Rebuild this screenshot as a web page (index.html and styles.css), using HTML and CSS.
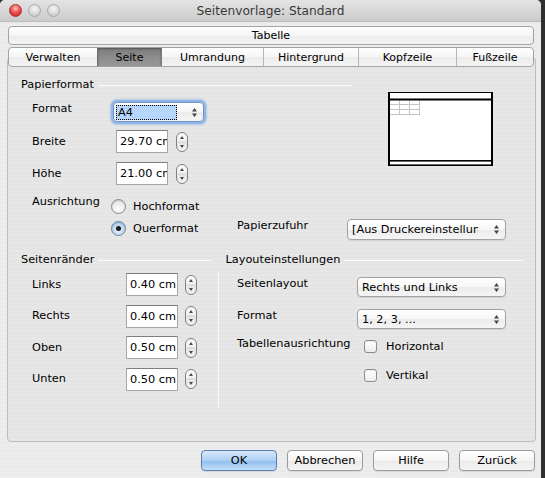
FILE: index.html
```html
<!DOCTYPE html>
<html>
<head>
<meta charset="utf-8">
<title>Seitenvorlage: Standard</title>
<link rel="stylesheet" href="styles.css">
</head>
<body>
<div class="window">
  <div class="titlebar">
    <div class="lights"><span class="light red"></span><span class="light"></span><span class="light"></span></div>
    <div class="title">Seitenvorlage: Standard</div>
    <div></div>
  </div>
  <div class="body">
    <div class="seg single">Tabelle</div>
    <div class="seg tabs">
      <span class="tab t1">Verwalten</span>
      <span class="tab t2 active">Seite</span>
      <span class="tab t3">Umrandung</span>
      <span class="tab t4">Hintergrund</span>
      <span class="tab t5">Kopfzeile</span>
      <span class="tab t6">Fußzeile</span>
    </div>
    <div class="panel">
      <div class="top">
        <div class="heading"><span>Papierformat</span><i class="rule"></i></div>
        <div class="preview">
          <svg width="105" height="74" viewBox="0 0 105 74">
            <rect x="0" y="0" width="105" height="74" fill="#fff"/>
            <g stroke="#c4c4c4" stroke-width="1">
              <line x1="1.5" y1="8" x2="1.5" y2="22.5"/>
              <line x1="11.5" y1="8" x2="11.5" y2="22.5"/>
              <line x1="21.5" y1="8" x2="21.5" y2="22.5"/>
              <line x1="31.5" y1="8" x2="31.5" y2="22.5"/>
              <line x1="1" y1="12.5" x2="32" y2="12.5"/>
              <line x1="1" y1="17.5" x2="32" y2="17.5"/>
              <line x1="1" y1="22.5" x2="32" y2="22.5"/>
            </g>
            <rect x="0" y="0" width="2" height="74" fill="#000"/>
            <rect x="103" y="0" width="2" height="74" fill="#000"/>
            <rect x="0" y="0" width="105" height="1" fill="#000"/>
            <rect x="0" y="72.4" width="105" height="1.6" fill="#000"/>
            <rect x="0" y="6.5" width="105" height="2" fill="#000"/>
            <rect x="0" y="68" width="105" height="1.6" fill="#000"/>
          </svg>
        </div>
        <div class="row r-format">
          <span class="lbl lbl-top w81">Format</span>
          <div class="select focus w91">
            <span class="sel">A4</span>
            <svg class="arrows" width="7" height="11" viewBox="0 0 7 11"><path d="M1 4.5 L3.5 1 L6 4.5 Z M1 6.5 L3.5 10 L6 6.5 Z" fill="#444"/></svg>
          </div>
        </div>
        <div class="row r-breite">
          <span class="lbl w84">Breite</span>
          <div class="input">29.70 cm</div>
          <div class="stepper s8"><svg width="10" height="18" viewBox="0 0 10 18"><line x1="1" y1="9" x2="9" y2="9" stroke="#d2d2d2"/><path d="M3 6 L5 3 L7 6 Z M3 12 L5 15 L7 12 Z" fill="#4a4a4a"/></svg></div>
        </div>
        <div class="row r-hoehe">
          <span class="lbl w84">Höhe</span>
          <div class="input">21.00 cm</div>
          <div class="stepper s8"><svg width="10" height="18" viewBox="0 0 10 18"><line x1="1" y1="9" x2="9" y2="9" stroke="#d2d2d2"/><path d="M3 6 L5 3 L7 6 Z M3 12 L5 15 L7 12 Z" fill="#4a4a4a"/></svg></div>
        </div>
        <div class="orient">
          <span class="lbl lbl-top w78">Ausrichtung</span>
          <div class="radios">
            <div class="radio-row"><span class="radio"></span><span>Hochformat</span></div>
            <div class="radio-row">
              <span class="radio on"></span><span class="w104">Querformat</span>
              <span class="lbl feed w110">Papierzufuhr</span>
              <div class="select feed-select w159">
                <span class="clip">[Aus Druckereinstellungen]</span>
                <svg class="arrows" width="7" height="11" viewBox="0 0 7 11"><path d="M1 4.5 L3.5 1 L6 4.5 Z M1 6.5 L3.5 10 L6 6.5 Z" fill="#444"/></svg>
              </div>
            </div>
          </div>
        </div>
      </div>

      <div class="bottom">
        <div class="margins">
          <div class="heading"><span>Seitenränder</span><i class="rule"></i></div>
          <div class="mrow first">
            <span class="lbl w94">Links</span><div class="input">0.40 cm</div>
            <div class="stepper s7"><svg width="10" height="18" viewBox="0 0 10 18"><line x1="1" y1="9" x2="9" y2="9" stroke="#d2d2d2"/><path d="M3 6 L5 3 L7 6 Z M3 12 L5 15 L7 12 Z" fill="#4a4a4a"/></svg></div>
          </div>
          <div class="mrow">
            <span class="lbl w94">Rechts</span><div class="input">0.40 cm</div>
            <div class="stepper s7"><svg width="10" height="18" viewBox="0 0 10 18"><line x1="1" y1="9" x2="9" y2="9" stroke="#d2d2d2"/><path d="M3 6 L5 3 L7 6 Z M3 12 L5 15 L7 12 Z" fill="#4a4a4a"/></svg></div>
          </div>
          <div class="mrow">
            <span class="lbl w94">Oben</span><div class="input">0.50 cm</div>
            <div class="stepper s7"><svg width="10" height="18" viewBox="0 0 10 18"><line x1="1" y1="9" x2="9" y2="9" stroke="#d2d2d2"/><path d="M3 6 L5 3 L7 6 Z M3 12 L5 15 L7 12 Z" fill="#4a4a4a"/></svg></div>
          </div>
          <div class="mrow">
            <span class="lbl w94">Unten</span><div class="input">0.50 cm</div>
            <div class="stepper s7"><svg width="10" height="18" viewBox="0 0 10 18"><line x1="1" y1="9" x2="9" y2="9" stroke="#d2d2d2"/><path d="M3 6 L5 3 L7 6 Z M3 12 L5 15 L7 12 Z" fill="#4a4a4a"/></svg></div>
          </div>
        </div>
        <div class="layout">
          <div class="heading lh"><span>Layouteinstellungen</span><i class="rule"></i></div>
          <div class="layout-body">
            <div class="lrow">
              <span class="lbl lbl-top w120">Seitenlayout</span>
              <div class="select w149">
                <span>Rechts und Links</span>
                <svg class="arrows" width="7" height="11" viewBox="0 0 7 11"><path d="M1 4.5 L3.5 1 L6 4.5 Z M1 6.5 L3.5 10 L6 6.5 Z" fill="#444"/></svg>
              </div>
            </div>
            <div class="lrow second">
              <span class="lbl lbl-top w120">Format</span>
              <div class="select w149">
                <span>1, 2, 3, ...</span>
                <svg class="arrows" width="7" height="11" viewBox="0 0 7 11"><path d="M1 4.5 L3.5 1 L6 4.5 Z M1 6.5 L3.5 10 L6 6.5 Z" fill="#444"/></svg>
              </div>
            </div>
            <div class="tabrow">
              <span class="lbl lbl-top w127">Tabellenausrichtung</span>
              <div class="checks">
                <div class="check-row"><span class="check"></span><span>Horizontal</span></div>
                <div class="check-row"><span class="check"></span><span>Vertikal</span></div>
              </div>
            </div>
          </div>
        </div>
      </div>
    </div>
    <div class="buttons">
      <div class="btn default">OK</div>
      <div class="btn">Abbrechen</div>
      <div class="btn">Hilfe</div>
      <div class="btn">Zurück</div>
    </div>
  </div>
</div>
</body>
</html>
```

FILE: styles.css
```css
* { box-sizing: border-box; }
html, body { margin: 0; padding: 0; }
body {
  width: 545px;
  height: 478px;
  overflow: hidden;
  background: #2f2f2f;
  font-family: "DejaVu Sans", "Liberation Sans", sans-serif;
  font-size: 11.3px;
  color: #000;
}
.window {
  width: 541px;
  height: 478px;
  background: repeating-linear-gradient(180deg, #ededed 0 2px, #eaeaea 2px 4px);
  border-radius: 5px 5px 0 0;
  overflow: hidden;
  display: flex;
  flex-direction: column;
}
.titlebar {
  height: 22px;
  flex: none;
  display: grid;
  grid-template-columns: 1fr auto 1fr;
  align-items: center;
  background: linear-gradient(#e4e4e4, #cbcbcb);
  border-bottom: 1px solid #bcbcbc;
}
.lights { display: flex; gap: 6px; margin-left: 8.5px; }
.light {
  width: 13px; height: 13px; border-radius: 50%;
  border: 1px solid #a9a9a9;
  background: radial-gradient(circle at 50% 35%, #f7f7f7, #d2d2d2 65%, #bdbdbd);
}
.light.red {
  border-color: #a83232;
  background: radial-gradient(circle at 50% 30%, #ffc0c0, #f05050 45%, #c41c1c);
}
.title { font-size: 12.2px; color: #3a3a3a; white-space: nowrap; }

.body {
  flex: 1;
  padding: 4px 5px 0 7px;
  display: flex;
  flex-direction: column;
}
.seg {
  display: flex;
  border: 1px solid #a3a3a3;
  border-radius: 4px;
  background: linear-gradient(#fefefe, #f6f6f6 50%, #ececec 52%, #f4f4f4);
  overflow: hidden;
  font-size: 11px;
  flex: none;
}
.seg.single { height: 19px; margin: 0 2px 0 1px; justify-content: center; align-items: center; }
.seg.tabs { height: 20px; margin: 2px 2px 0 1px; position: relative; z-index: 1; }
.tab {
  display: flex; align-items: center; justify-content: center;
  border-left: 1px solid #b6b6b6;
  height: 100%;
}
.tab:first-child { border-left: none; }
.t1 { width: 88px; }
.t2 { width: 64px; }
.t3 { width: 102px; }
.t4 { width: 95px; }
.t5 { width: 98px; }
.t6 { width: 77px; }
.tab.active {
  background: linear-gradient(#7c7c7c, #8f8f8f 60%, #969696);
  box-shadow: inset 0 1px 2px rgba(0,0,0,.35);
  border-left-color: #6f6f6f;
}
.tab.active + .tab { border-left-color: #7a7a7a; }

.panel {
  flex: none;
  margin-top: -10px;
  height: 385px;
  border: 1px solid #bdbdbd;
  border-radius: 4px;
  background: repeating-linear-gradient(180deg, #e7e7e7 0 2px, #e4e4e4 2px 4px);
  padding: 20px 0 0 13px;
}

.heading { display: flex; align-items: center; height: 14px; line-height: 14px; white-space: nowrap; }
.rule { flex: 1; height: 1px; background: #fbfbfb; margin-left: 4px; }

.top { display: grid; grid-template-columns: 331px auto; }
.top .heading { grid-column: 1; grid-row: 1; }
.preview {
  grid-column: 2; grid-row: 1 / span 4;
  align-self: start;
  margin: 14px 0 0 36px;
  width: 105px; height: 74px;
}
.preview svg { display: block; }
.row { grid-column: 1; display: flex; align-items: center; padding-left: 11px; }
.r-format { margin-top: 10px; height: 20px; }
.r-breite { margin-top: 8px; height: 23px; }
.r-hoehe { margin-top: 9px; height: 23px; }

.lbl { flex: none; line-height: 14px; white-space: nowrap; }
.lbl-top { align-self: flex-start; }
.w78 { width: 78.5px; }
.w81 { width: 81px; }
.w84 { width: 84px; }
.w94 { width: 94px; }
.w104 { width: 104px; flex: none; }
.w110 { width: 110px; }
.w120 { width: 120px; }
.w127 { width: 127px; }
.w91 { width: 91px; }
.w149 { width: 149px; }
.w159 { width: 159px; }

.select {
  flex: none;
  display: flex; align-items: center;
  height: 20px;
  border: 1px solid #a2a2a2;
  border-radius: 4px;
  background: linear-gradient(#ffffff, #f7f7f7 50%, #ececec 52%, #f5f5f5);
  padding-left: 4px;
  white-space: nowrap;
  box-shadow: 0 1px 1px rgba(0,0,0,.08);
}
.select .arrows { margin-left: auto; margin-right: 5px; flex: none; }
.select.focus {
  padding-left: 2px;
  border-color: #6f93c6;
  box-shadow: 0 0 0 2px #8fb6ea, 0 0 2px 3px rgba(110,160,230,.45);
}
.sel {
  width: 61px; height: 15px; line-height: 13px;
  background: #b7d6fb;
  border: 1px dotted #000;
  padding-left: 1px;
}
.feed { margin-bottom: 4px; }
.feed-select { height: 21px; margin-top: 3px; }
.clip { width: 126px; overflow: hidden; }

.input {
  flex: none;
  width: 52px; height: 23px;
  background: #fff;
  border: 1px solid #a6a6a6;
  border-top-color: #7f7f7f;
  padding-left: 3px;
  line-height: 21px;
  overflow: hidden;
  white-space: nowrap;
}
.stepper {
  flex: none;
  width: 12px; height: 20px;
  border: 1px solid #808080;
  border-radius: 6px;
  background: linear-gradient(#fdfdfd, #efefef 50%, #e4e4e4 51%, #f4f4f4);
  display: flex;
}
.stepper svg { display: block; }
.s8 { margin-left: 8px; }
.s7 { margin-left: 7px; }

.orient { grid-column: 1 / -1; margin-top: 10px; display: flex; padding-left: 11px; }
.radios { display: flex; flex-direction: column; }
.radio-row { display: flex; align-items: center; height: 22px; white-space: nowrap; }
.radio {
  flex: none;
  width: 15px; height: 15px; border-radius: 50%;
  margin-right: 7.5px;
  border: 1px solid #8a8a8a;
  background: radial-gradient(circle at 50% 70%, #ffffff, #e6e6e6 70%, #d8d8d8);
  box-shadow: inset 0 1px 1px rgba(0,0,0,.12);
}
.radio.on {
  border-color: #6a819f;
  background: radial-gradient(circle at 50% 65%, #eaf2fb 0, #bed6ef 55%, #8fb3dc);
  display: flex; align-items: center; justify-content: center;
}
.radio.on::after {
  content: "";
  width: 5px; height: 5px; border-radius: 50%;
  background: #1b1b1b;
}

.bottom { display: flex; margin-top: 14px; }
.margins { width: 191px; flex: none; }
.mrow { display: flex; align-items: center; height: 23px; padding-left: 11px; margin-top: 8.67px; }
.mrow.first { margin-top: 6px; }

.layout { width: 305px; margin-left: 6px; flex: none; }
.layout .heading { padding-left: 7.5px; }
.layout-body {
  margin-top: 5px;
  height: 136px;
  border-left: 1px solid #fafafa;
  padding: 5px 0 0 18px;
}
.lrow { display: flex; height: 20px; }
.lrow.second { margin-top: 12px; }
.tabrow { display: flex; margin-top: 7.5px; }
.checks { display: flex; flex-direction: column; gap: 8.5px; }
.check-row { display: flex; align-items: center; height: 20px; white-space: nowrap; }
.check {
  flex: none;
  width: 13px; height: 13px;
  margin-right: 9px;
  border: 1px solid #8c8c8c;
  border-radius: 3px;
  background: linear-gradient(#ffffff, #ececec);
  box-shadow: inset 0 1px 1px rgba(0,0,0,.08);
}

.buttons {
  display: flex; justify-content: flex-end; gap: 10px;
  margin-top: 8px; padding-right: 1px;
}
.btn {
  width: 76px; height: 21px;
  border: 1px solid #9b9b9b;
  border-radius: 4px;
  background: linear-gradient(#ffffff, #f5f5f5 50%, #e9e9e9 52%, #f6f6f6);
  display: flex; align-items: center; justify-content: center;
  box-shadow: 0 1px 1px rgba(0,0,0,.08);
}
.btn.default {
  border-color: #5b7fb3;
  background: linear-gradient(#d6e8fb, #aed0f4 50%, #8fbef0 52%, #c2e0fb);
}
```
